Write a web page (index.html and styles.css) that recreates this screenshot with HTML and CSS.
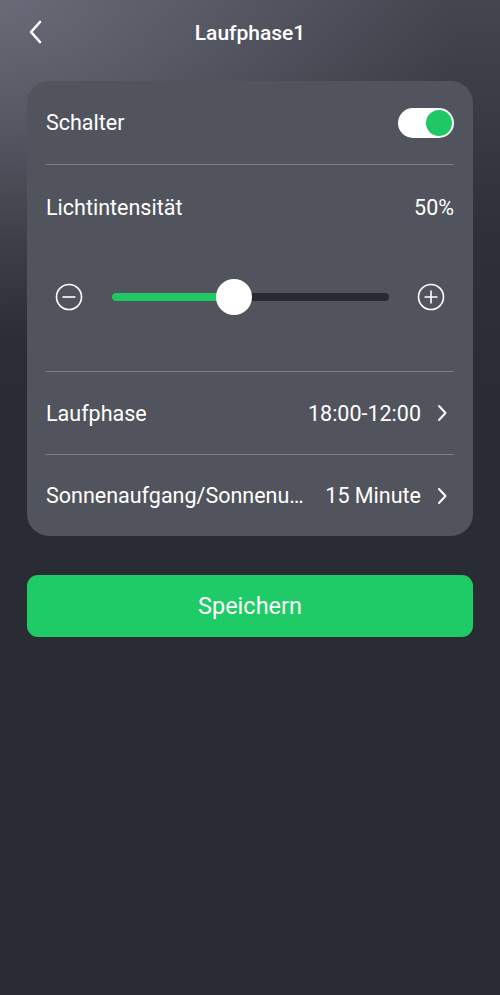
FILE: index.html
```html
<!DOCTYPE html>
<html lang="de">
<head>
    <meta charset="UTF-8">
    <meta name="viewport" content="width=device-width, initial-scale=1.0">
    <title>Laufphase1</title>
    <link rel="stylesheet" href="styles.css">
</head>
<body>
    <div class="screen">
        <header class="topbar">
            <button class="back-btn" aria-label="Zurück">
                <svg width="14" height="24" viewBox="0 0 14 24"><path d="M12 2 L3 12 L12 22" fill="none" stroke="#fff" stroke-width="2.6" stroke-linecap="round" stroke-linejoin="round"/></svg>
            </button>
            <h1 class="title">Laufphase1</h1>
        </header>

        <div class="card">
            <div class="row">
                <span class="label">Schalter</span>
                <div class="toggle on"><span class="knob"></span></div>
            </div>

            <div class="intensity">
                <div class="row">
                    <span class="label">Lichtintensität</span>
                    <span class="value">50%</span>
                </div>
                <div class="slider-row">
                    <svg class="round-icon" width="30" height="30" viewBox="0 0 30 30"><circle cx="15" cy="15" r="12.5" fill="none" stroke="#fff" stroke-width="1.6"/><path d="M8.5 15 H21.5" stroke="#fff" stroke-width="1.6"/></svg>
                    <div class="track">
                        <div class="fill" style="width: 44%"></div>
                        <span class="thumb" style="left: 44%"></span>
                    </div>
                    <svg class="round-icon" width="30" height="30" viewBox="0 0 30 30"><circle cx="15" cy="15" r="12.5" fill="none" stroke="#fff" stroke-width="1.6"/><path d="M8.5 15 H21.5 M15 8.5 V21.5" stroke="#fff" stroke-width="1.6"/></svg>
                </div>
            </div>

            <div class="row link">
                <span class="label">Laufphase</span>
                <span class="value">18:00-12:00</span>
                <svg class="chevron" width="12" height="20" viewBox="0 0 12 20"><path d="M3 3 L9.5 10 L3 17" fill="none" stroke="#fff" stroke-width="2" stroke-linecap="round" stroke-linejoin="round"/></svg>
            </div>

            <div class="row link">
                <span class="label">Sonnenaufgang/Sonnenu…</span>
                <span class="value">15 Minute</span>
                <svg class="chevron" width="12" height="20" viewBox="0 0 12 20"><path d="M3 3 L9.5 10 L3 17" fill="none" stroke="#fff" stroke-width="2" stroke-linecap="round" stroke-linejoin="round"/></svg>
            </div>
        </div>

        <button class="save-btn">Speichern</button>
    </div>
</body>
</html>
```

FILE: styles.css
```css
html, body { margin: 0; padding: 0; }
body {
    font-family: Roboto, "Noto Sans", Arial, sans-serif;
    color: #fff;
    background: #2a2c34;
}
.screen {
    min-height: 995px;
    padding: 0 27px;
    box-sizing: border-box;
    background:
        radial-gradient(ellipse 460px 340px at 0 0, rgba(120, 123, 136, 0.7), rgba(120, 123, 136, 0) 100%),
        linear-gradient(to bottom, #43464f 0, #2e3038 240px, #2a2c34 420px);
}
.topbar {
    height: 65px;
    display: flex;
    align-items: center;
    justify-content: center;
    position: relative;
}
.back-btn {
    position: absolute;
    left: 0;
    top: 20px;
    background: none;
    border: none;
    padding: 0;
    width: 16px;
    height: 26px;
    cursor: pointer;
}
.title {
    margin: 0;
    font-size: 21px;
    font-weight: 500;
}
.card {
    margin-top: 16px;
    background: #51545c;
    border-radius: 22px;
    padding: 0 19px;
}
.row {
    height: 83px;
    display: flex;
    align-items: center;
    font-size: 21.5px;
    border-bottom: 1px solid #7c7f87;
}
.row.link { height: 82px; }
.card > .row:last-child { border-bottom: none; height: 81px; }
.label {
    flex: 1;
    white-space: nowrap;
}
.value { white-space: nowrap; }
.link .label { padding-right: 10px; }
.chevron { margin-left: 15px; margin-right: 6px; }
.toggle {
    width: 56px;
    height: 30px;
    border-radius: 15px;
    background: #fff;
    position: relative;
}
.toggle .knob {
    position: absolute;
    top: 2px;
    right: 2px;
    width: 26px;
    height: 26px;
    border-radius: 50%;
    background: #1fc864;
}
.intensity { border-bottom: 1px solid #7c7f87; padding-bottom: 26px; }
.intensity .row { border-bottom: none; height: 84px; }
.slider-row {
    height: 96px;
    display: flex;
    align-items: center;
    padding: 0 8px;
}
.round-icon { flex: none; }
.track {
    flex: 1;
    height: 8px;
    margin: 0 27px 0 28px;
    border-radius: 4px;
    background: #2a2b30;
    position: relative;
}
.fill {
    height: 100%;
    border-radius: 4px;
    background: #1fc864;
}
.thumb {
    position: absolute;
    top: 50%;
    width: 36px;
    height: 36px;
    border-radius: 50%;
    background: #fff;
    transform: translate(-50%, -50%);
}
.save-btn {
    display: block;
    width: 100%;
    height: 62px;
    margin-top: 39px;
    border: none;
    border-radius: 11px;
    background: #1ecb66;
    color: #fff;
    font-family: inherit;
    font-size: 23.5px;
    cursor: pointer;
}
```
